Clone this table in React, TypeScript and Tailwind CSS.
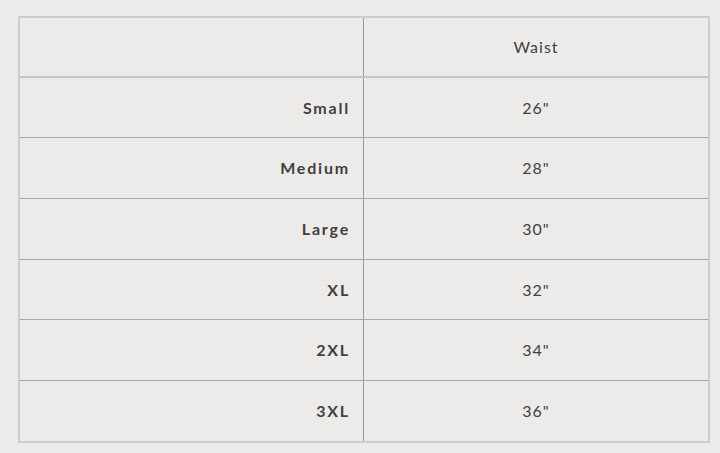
import React from "react";

const rows: [string, string, string][] = [
  ["Small", '26"', "h-[60px]"],
  ["Medium", '28"', "h-[61px]"],
  ["Large", '30"', "h-[61px]"],
  ["XL", '32"', "h-[60px]"],
  ["2XL", '34"', "h-[61px]"],
  ["3XL", '36"', "h-[60px]"],
];

export default function App() {
  return (
    <div
      className="w-[720px] h-[453px] bg-[#edebea] pt-[16px] pl-[18px]"
      style={{ fontFamily: "Lato, 'Open Sans', sans-serif" }}
    >
      <div className="w-[692px] border-[2px] border-[#cfcdcc] text-[#404040]">
        <div className="grid grid-cols-[344px_1fr] h-[60px] border-b-[2px] border-[#c4c3c2]">
          <div className="border-r border-[#9a9999]" />
          <div className="flex items-center justify-center text-[16px] tracking-[1px]">
            Waist
          </div>
        </div>
        {rows.map(([s, w, h], i) => (
          <div
            key={s}
            className={
              "grid grid-cols-[344px_1fr] " +
              h +
              " " +
              (i < rows.length - 1 ? "border-b border-[#a9a8a7]" : "")
            }
          >
            <div className="border-r border-[#9a9999] flex items-center justify-end pr-[13px] text-[16px] font-bold tracking-[1.8px]">
              {s}
            </div>
            <div className="flex items-center justify-center text-[16px] tracking-[1px]">
              {w}
            </div>
          </div>
        ))}
      </div>
    </div>
  );
}
